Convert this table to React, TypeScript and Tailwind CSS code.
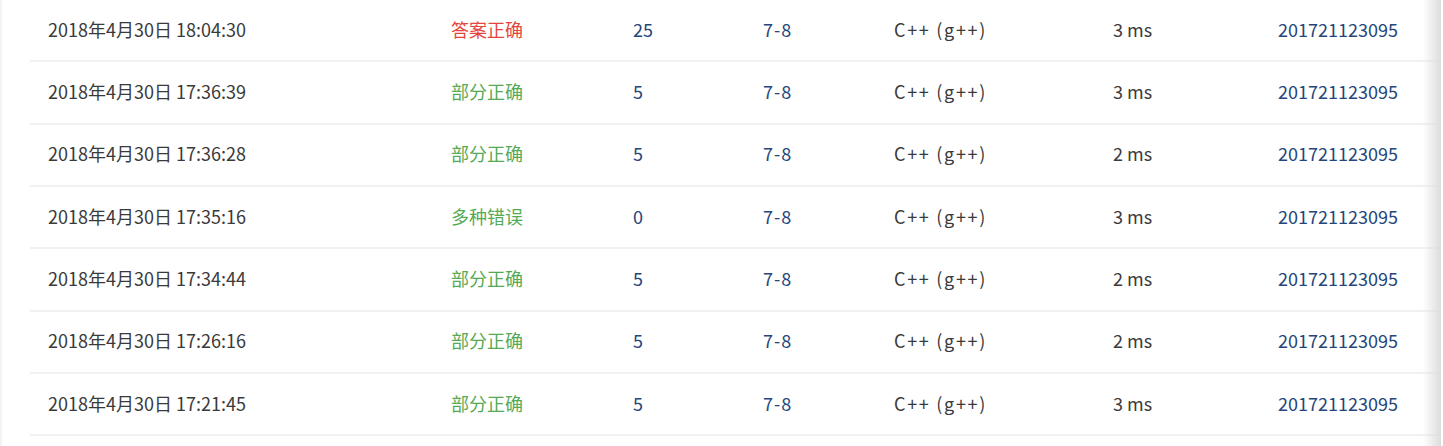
const rows = [
  { time: '2018年4月30日 18:04:30', status: '答案正确', score: '25', ms: '3 ms' },
  { time: '2018年4月30日 17:36:39', status: '部分正确', score: '5', ms: '3 ms' },
  { time: '2018年4月30日 17:36:28', status: '部分正确', score: '5', ms: '2 ms' },
  { time: '2018年4月30日 17:35:16', status: '多种错误', score: '0', ms: '3 ms' },
  { time: '2018年4月30日 17:34:44', status: '部分正确', score: '5', ms: '2 ms' },
  { time: '2018年4月30日 17:26:16', status: '部分正确', score: '5', ms: '2 ms' },
  { time: '2018年4月30日 17:21:45', status: '部分正确', score: '5', ms: '3 ms' },
]

export default function App() {
  return (
    <div
      className="relative h-[446px] w-[1443px] overflow-hidden bg-white border-l-2 border-[#f3f3f3]"
      style={{ fontFamily: '"Microsoft YaHei", "Noto Sans CJK SC", sans-serif' }}
    >
      <div className="ml-[28px] mr-[3px] text-[18px] leading-none">
        {rows.map((r, i) => (
          <div
            key={i}
            className="grid h-[62.33px] grid-cols-[403px_182px_130px_131px_219px_165px_1fr] items-center border-b-2 border-[#f1f1f1] pb-[3px] pl-[18px]"
          >
            <span className="text-[#3a3a3a]">{r.time}</span>
            <span className={r.status === '答案正确' ? 'text-[#e4453d]' : 'text-[#55aa55]'}>{r.status}</span>
            <span className="text-[#24467a]">{r.score}</span>
            <span className="text-[#24467a] tracking-[1px]">7-8</span>
            <span className="text-[#3a3a3a] tracking-[1.7px]">C++ (g++)</span>
            <span className="text-[#3a3a3a]">{r.ms}</span>
            <span className="text-[#24467a]">201721123095</span>
          </div>
        ))}
      </div>
      {/* right edge shadow of the neighbouring panel */}
      <div className="absolute right-[2px] top-0 h-full w-[18px] bg-gradient-to-r from-transparent to-[#dcdcdc]" />
    </div>
  )
}
